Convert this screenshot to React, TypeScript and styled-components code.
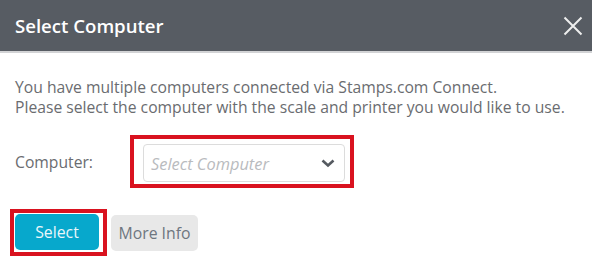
import React from "react";
import styled, { createGlobalStyle } from "styled-components";

const GlobalStyle = createGlobalStyle`
  html, body {
    margin: 0;
    padding: 0;
    background: #ffffff;
  }
  body {
    font-family: "Open Sans", "Liberation Sans", sans-serif;
    width: 592px;
    height: 272px;
    overflow: hidden;
  }
`;

const Dialog = styled.div`
  width: 592px;
  height: 272px;
  background: #ffffff;
  display: flex;
  flex-direction: column;
`;

const Header = styled.div`
  height: 51px;
  background: #575c63;
  border-bottom: 2px solid #d2d3d5;
  display: flex;
  align-items: center;
  justify-content: space-between;
  padding: 0 5px 0 15px;
`;

const Title = styled.h1`
  margin: 0;
  font-size: 18.6px;
  font-weight: 600;
  color: #ffffff;
  line-height: 24px;
`;

const CloseButton = styled.button`
  width: 28px;
  height: 28px;
  border: 0;
  padding: 0;
  background: transparent;
  display: flex;
  align-items: center;
  justify-content: center;
  cursor: pointer;
`;

const Body = styled.div`
  padding: 24px 15px 0 15px;
  display: flex;
  flex-direction: column;
`;

const Message = styled.p`
  margin: 0;
  font-size: 15.7px;
  line-height: 20px;
  color: #6a6c70;
`;

const FieldRow = styled.div`
  margin-top: 18px;
  display: flex;
  align-items: center;
`;

const Label = styled.label`
  width: 115px;
  font-size: 15.7px;
  color: #6a6c70;
`;

const Highlight = styled.div<{ $pad: string; $shift?: number }>`
  border: 4px solid #d9121f;
  padding: ${(p) => p.$pad};
  margin-left: ${(p) => p.$shift ?? 0}px;
  display: flex;
`;

const SelectBox = styled.div`
  width: 202px;
  height: 38px;
  box-sizing: border-box;
  border: 1px solid #dcdcdc;
  border-radius: 4px;
  display: flex;
  align-items: center;
  justify-content: space-between;
  padding: 0 9px 0 7px;
  background: #fff;
`;

const Placeholder = styled.span`
  font-size: 16.4px;
  font-style: italic;
  color: #b9bbbe;
`;

const ButtonRow = styled.div`
  margin-top: 21px;
  display: flex;
  align-items: center;
  gap: 4px;
`;

const Button = styled.button<{ $primary?: boolean }>`
  height: 36px;
  padding: 0;
  width: ${(p) => (p.$primary ? 84 : 87)}px;
  border: 0;
  border-radius: 5px;
  font-family: "Open Sans", "Liberation Sans", sans-serif;
  font-size: 15.8px;
  background: ${(p) => (p.$primary ? "#07a8cc" : "#e8e8e8")};
  color: ${(p) => (p.$primary ? "#eaf6fa" : "#6e7680")};
  cursor: pointer;
`;

export default function App() {
  return (
    <>
      <GlobalStyle />
      <Dialog>
        <Header>
          <Title>Select Computer</Title>
          <CloseButton aria-label="Close">
            <svg width="20" height="20" viewBox="0 0 20 20">
              <path
                d="M1.5 1.5 L18.5 18.5 M18.5 1.5 L1.5 18.5"
                stroke="#eeeeee"
                strokeWidth="2"
                fill="none"
              />
            </svg>
          </CloseButton>
        </Header>
        <Body>
          <Message>
            You have multiple computers connected via Stamps.com Connect.
            <br />
            Please select the computer with the scale and printer you would like to use.
          </Message>
          <FieldRow>
            <Label>Computer:</Label>
            <Highlight $pad="5px 5px 2px 9px">
              <SelectBox>
                <Placeholder>Select Computer</Placeholder>
                <svg width="14" height="9" viewBox="0 0 14 9">
                  <path
                    d="M1.5 1.5 L7 6.5 L12.5 1.5"
                    stroke="#555a60"
                    strokeWidth="2.6"
                    fill="none"
                  />
                </svg>
              </SelectBox>
            </Highlight>
          </FieldRow>
          <ButtonRow>
            <Highlight $pad="1px 4px 2px 1px" $shift={-5}>
              <Button $primary>Select</Button>
            </Highlight>
            <Button>More Info</Button>
          </ButtonRow>
        </Body>
      </Dialog>
    </>
  );
}
